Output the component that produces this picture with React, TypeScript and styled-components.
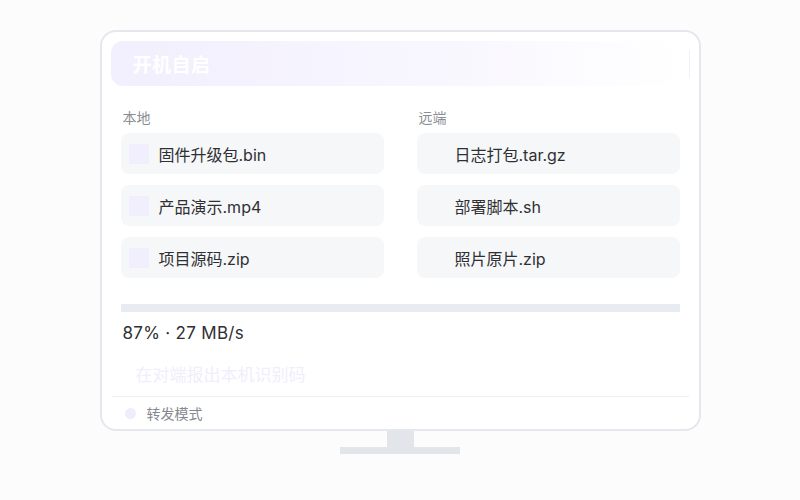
import React from "react";
import styled, { createGlobalStyle } from "styled-components";

const GlobalStyle = createGlobalStyle`
  html, body {
    margin: 0;
    padding: 0;
    background: #fcfcfd;
    font-family: Inter, "Noto Sans CJK SC", sans-serif;
  }
`;

const Page = styled.div`
  display: flex;
  flex-direction: column;
  align-items: center;
  padding-top: 30px;
  width: 800px;
`;

const Monitor = styled.div`
  width: 601px;
  height: 401px;
  box-sizing: border-box;
  border: 2px solid #e4e7eb;
  border-radius: 16px;
  background: #ffffff;
  padding: 9px 9px 0 9px;
  display: flex;
  flex-direction: column;
`;

const Header = styled.div`
  height: 45px;
  border-radius: 12px;
  background: linear-gradient(90deg, #f2effe 0%, #f8f6fe 55%, #ffffff 100%);
  display: flex;
  align-items: center;
  justify-content: space-between;
  padding-left: 22px;
  box-sizing: border-box;
`;

const Title = styled.div`
  color: #ffffff;
  font-size: 19px;
  font-weight: 700;
  letter-spacing: 0.5px;
`;

const HeaderEdge = styled.div`
  width: 1px;
  height: 28px;
  background: #f0f0f3;
`;

const Body = styled.div`
  padding: 0 10px;
  display: flex;
  flex-direction: column;
`;

const Columns = styled.div`
  display: grid;
  grid-template-columns: 1fr 1fr;
  column-gap: 33px;
  margin-top: 22px;
`;

const Column = styled.div`
  display: flex;
  flex-direction: column;
  gap: 11px;
`;

const Label = styled.div`
  font-size: 14px;
  line-height: 20px;
  color: #8a8d93;
  padding-left: 2px;
  margin-bottom: -6px;
`;

const FileCard = styled.div`
  height: 41px;
  border-radius: 8px;
  background: #f6f7f9;
  display: flex;
  align-items: center;
  padding-left: 8px;
  gap: 10px;
`;

const FileIcon = styled.div<{ $hidden?: boolean }>`
  width: 20px;
  height: 20px;
  background: ${(p) => (p.$hidden ? "transparent" : "#f1eefd")};
`;

const FileName = styled.div`
  font-size: 16px;
  color: #2f3033;
`;

const Progress = styled.div`
  margin-top: 26px;
  height: 8px;
  background: #e8ebef;
`;

const Fill = styled.div`
  height: 100%;
  background: #e8ebef;
`;

const Stats = styled.div`
  margin-top: 9px;
  font-size: 17px;
  line-height: 24px;
  color: #2f3033;
  padding-left: 2px;
  letter-spacing: 0.3px;
`;

const Hint = styled.div`
  margin-top: 18px;
  font-size: 17px;
  line-height: 24px;
  color: #f0eefc;
  padding-left: 15px;
`;

const Divider = styled.div`
  margin: 9px 1px 0 1px;
  height: 1px;
  background: #eeeef2;
`;

const Footer = styled.div`
  height: 32px;
  display: flex;
  align-items: center;
  padding-left: 14px;
  gap: 11px;
`;

const Dot = styled.div`
  width: 11px;
  height: 11px;
  border-radius: 50%;
  background: #efecfc;
`;

const FooterText = styled.div`
  font-size: 14px;
  color: #85888e;
`;

const Neck = styled.div`
  width: 27px;
  height: 16px;
  background: #e2e5ea;
`;

const Base = styled.div`
  width: 120px;
  height: 7px;
  background: #e2e5ea;
`;

const local = ["固件升级包.bin", "产品演示.mp4", "项目源码.zip"];
const remote = ["日志打包.tar.gz", "部署脚本.sh", "照片原片.zip"];
const progress = 87;

export default function App() {
  return (
    <>
      <GlobalStyle />
      <Page>
        <Monitor>
          <Header>
            <Title>开机自启</Title>
            <HeaderEdge />
          </Header>
          <Body>
            <Columns>
              <Column>
                <Label>本地</Label>
                {local.map((f) => (
                  <FileCard key={f}>
                    <FileIcon />
                    <FileName>{f}</FileName>
                  </FileCard>
                ))}
              </Column>
              <Column>
                <Label>远端</Label>
                {remote.map((f) => (
                  <FileCard key={f}>
                    <FileIcon $hidden />
                    <FileName>{f}</FileName>
                  </FileCard>
                ))}
              </Column>
            </Columns>
            <Progress>
              <Fill style={{ width: `${progress}%` }} />
            </Progress>
            <Stats>87% · 27 MB/s</Stats>
            <Hint>在对端报出本机识别码</Hint>
          </Body>
          <Divider />
          <Footer>
            <Dot />
            <FooterText>转发模式</FooterText>
          </Footer>
        </Monitor>
        <Neck />
        <Base />
      </Page>
    </>
  );
}
